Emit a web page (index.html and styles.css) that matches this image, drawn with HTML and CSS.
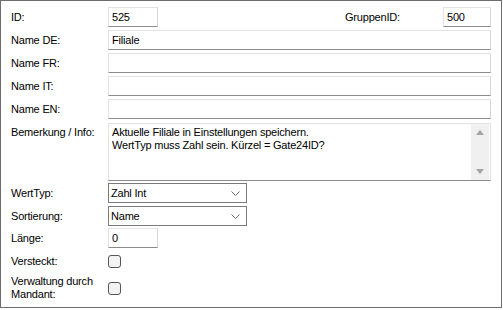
FILE: index.html
```html
<!DOCTYPE html>
<html lang="de">

<head>
    <meta charset="UTF-8">
    <title>Parameter</title>
    <link rel="stylesheet" href="styles.css">
</head>

<body>
    <div class="frame">
        <div class="row row-first">
            <span class="label">ID:</span>
            <div class="field short">525</div>
            <span class="label label-right">GruppenID:</span>
            <div class="field group">500</div>
        </div>
        <div class="row">
            <span class="label">Name DE:</span>
            <div class="field wide">Filiale</div>
        </div>
        <div class="row">
            <span class="label">Name FR:</span>
            <div class="field wide"></div>
        </div>
        <div class="row">
            <span class="label">Name IT:</span>
            <div class="field wide"></div>
        </div>
        <div class="row">
            <span class="label">Name EN:</span>
            <div class="field wide"></div>
        </div>
        <div class="row row-memo">
            <span class="label">Bemerkung / Info:</span>
            <div class="memo">
                <div class="memo-text">Aktuelle Filiale in Einstellungen speichern.<br>WertTyp muss Zahl sein. Kürzel = Gate24ID?</div>
                <div class="scrollbar">
                    <span class="arrow-up"></span>
                    <span class="arrow-down"></span>
                </div>
            </div>
        </div>
        <div class="row row-combo">
            <span class="label">WertTyp:</span>
            <div class="combo">
                <span>Zahl Int</span>
                <svg class="chevron" width="9" height="5" viewBox="0 0 9 5"><path d="M0.5 0.5 L4.5 4.5 L8.5 0.5" fill="none" stroke="#6a6a6a" stroke-width="1"/></svg>
            </div>
        </div>
        <div class="row row-combo">
            <span class="label">Sortierung:</span>
            <div class="combo">
                <span>Name</span>
                <svg class="chevron" width="9" height="5" viewBox="0 0 9 5"><path d="M0.5 0.5 L4.5 4.5 L8.5 0.5" fill="none" stroke="#6a6a6a" stroke-width="1"/></svg>
            </div>
        </div>
        <div class="row row-len">
            <span class="label">Länge:</span>
            <div class="field short">0</div>
        </div>
        <div class="row row-check">
            <span class="label">Versteckt:</span>
            <span class="checkbox"></span>
        </div>
        <div class="row row-check2">
            <span class="label label-two">Verwaltung durch<br>Mandant:</span>
            <span class="checkbox"></span>
        </div>
    </div>
</body>

</html>
```

FILE: styles.css
```css
body {
    margin: 0;
    background-color: #ffffff;
    font-family: "Liberation Sans", Arial, sans-serif;
    font-size: 11px;
    letter-spacing: -0.2px;
    color: #000000;
}

.frame {
    box-sizing: border-box;
    width: 502px;
    height: 308px;
    border: 1px solid #6d6d6d;
    padding: 6px 10px 0 10px;
    display: flex;
    flex-direction: column;
}

.row {
    display: flex;
    align-items: center;
    height: 20px;
    margin-top: 3px;
}

.row-first {
    margin-top: 0;
}

.label {
    width: 97px;
    flex-shrink: 0;
}

.label-right {
    width: 98px;
    margin-left: auto;
}

.field {
    box-sizing: border-box;
    height: 20px;
    padding: 2px 3px 0;
    border: 1px solid #e3e3e3;
    border-right-color: #d6d6d6;
    border-bottom-color: #8c8c8c;
    background-color: #ffffff;
    line-height: 15px;
}

.short {
    width: 50px;
}

.group {
    width: 48px;
}

.wide {
    width: 383px;
}

.row-memo {
    height: 58px;
    margin-top: 4px;
    align-items: flex-start;
}

.row-memo .label {
    padding-top: 3px;
}

.memo {
    box-sizing: border-box;
    width: 383px;
    height: 58px;
    display: flex;
    border: 1px solid #e3e3e3;
    border-bottom-color: #8c8c8c;
}

.memo-text {
    flex: 1;
    padding: 2px 3px;
    line-height: 13px;
}

.scrollbar {
    width: 18px;
    background-color: #f0f0f0;
    display: flex;
    flex-direction: column;
    align-items: center;
    justify-content: space-between;
    padding: 6px 0 6px;
    margin-right: 1px;
}

.arrow-up {
    width: 0;
    height: 0;
    border-left: 4px solid transparent;
    border-right: 4px solid transparent;
    border-bottom: 5px solid #a3a3a3;
}

.arrow-down {
    width: 0;
    height: 0;
    border-left: 4px solid transparent;
    border-right: 4px solid transparent;
    border-top: 5px solid #a3a3a3;
}

.row-combo {
    margin-top: 2px;
}

.row-combo + .row-combo {
    margin-top: 3px;
}

.combo {
    box-sizing: border-box;
    width: 139px;
    height: 20px;
    border: 1px solid #7a7a7a;
    display: flex;
    align-items: center;
    justify-content: space-between;
    padding: 0 6px 0 2px;
}

.row-len {
    margin-top: 2px;
}

.row-check {
    margin-top: 5px;
    height: 16px;
}

.checkbox {
    box-sizing: border-box;
    width: 13px;
    height: 13px;
    border: 1px solid #555555;
    border-radius: 3px;
    background-color: #f3f3f3;
}

.row-check2 {
    margin-top: 5px;
    height: 28px;
}

.label-two {
    line-height: 13px;
}
```
